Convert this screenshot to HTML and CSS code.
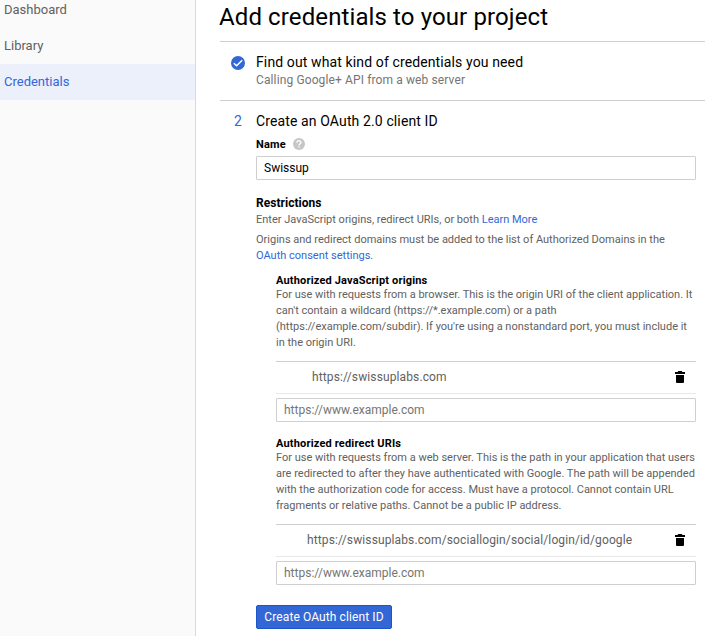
FILE: index.html
```html
<!DOCTYPE html>
<html lang="en">
<head>
<meta charset="utf-8">
<title>Add credentials to your project</title>
<link rel="stylesheet" href="styles.css">
</head>
<body>
<nav class="sidebar">
  <a class="nav-item">Dashboard</a>
  <a class="nav-item">Library</a>
  <a class="nav-item active">Credentials</a>
</nav>
<main class="content">
  <h1><span>Add credentials to your project</span></h1>
  <section class="step step-done">
    <div class="marker">
      <svg width="14" height="14" viewBox="0 0 14 14"><circle cx="7" cy="7" r="7" fill="#3367d6"/><path d="M2.9 7.200 5.600 9.800 11.200 4.300" fill="none" stroke="#fff" stroke-width="1.500"/></svg>
    </div>
    <div class="step-body">
      <h2><span>Find out what kind of credentials you need</span></h2>
      <p class="summary"><span>Calling Google+ API from a web server</span></p>
    </div>
  </section>
  <section class="step step-current">
    <div class="marker">2</div>
    <div class="step-body">
      <h2><span>Create an OAuth 2.0 client ID</span></h2>
      <div class="label-row"><label for="name">Name</label>
        <svg width="12" height="12" viewBox="0 0 12 12"><circle cx="6" cy="6" r="6" fill="#c6c6c6"/><path d="M4 4.700C4 2.100 8 2.100 8 4.500 8 5.700 6 5.800 6 7.400M6 8.500v1.300" fill="none" stroke="#fff" stroke-width="1.300"/></svg>
      </div>
      <input class="field" id="name" type="text" value="Swissup">
      <h3 class="restrictions">Restrictions</h3>
      <p class="text intro">Enter JavaScript origins, redirect URIs, or both <a>Learn More</a></p>
      <p class="text domains">Origins and redirect domains must be added to the list of Authorized Domains in the<br><a>OAuth consent settings</a>.</p>
      <div class="group">
        <h3>Authorized JavaScript origins</h3>
        <p class="text">For use with requests from a browser. This is the origin URI of the client application. It<br>can't contain a wildcard (https://*.example.com) or a path<br>(https://example.com/subdir). If you're using a nonstandard port, you must include it<br>in the origin URI.</p>
        <div class="uri-row origin">
          <span>https://swissuplabs.com</span>
          <svg class="trash" width="10" height="12" viewBox="0 0 10 12"><path d="M0 1h2.5l.8-1h3.4l.8 1H10v2H0zM1 4h8v6.7c0 .8-.5 1.3-1.3 1.3H2.3C1.5 12 1 11.5 1 10.700z"/></svg>
        </div>
        <input class="field" type="text" placeholder="https://www.example.com">
      </div>
      <div class="group group-redirect">
        <h3>Authorized redirect URIs</h3>
        <p class="text">For use with requests from a web server. This is the path in your application that users<br>are redirected to after they have authenticated with Google. The path will be appended<br>with the authorization code for access. Must have a protocol. Cannot contain URL<br>fragments or relative paths. Cannot be a public IP address.</p>
        <div class="uri-row redirect">
          <span>https://swissuplabs.com/sociallogin/social/login/id/google</span>
          <svg class="trash" width="10" height="12" viewBox="0 0 10 12"><path d="M0 1h2.5l.8-1h3.4l.8 1H10v2H0zM1 4h8v6.7c0 .8-.5 1.3-1.3 1.3H2.3C1.5 12 1 11.5 1 10.700z"/></svg>
        </div>
        <input class="field" type="text" placeholder="https://www.example.com">
      </div>
      <button class="create">Create OAuth client ID</button>
    </div>
  </section>
</main>
</body>
</html>
```
FILE: styles.css
```css
* { box-sizing: border-box; }
body {
  margin: 0;
  height: 636px;
  display: flex;
  overflow: hidden;
  background: #fff;
  color: #000;
  font-family: Roboto, "Liberation Sans", sans-serif;
}
h1, h2, h3, p { margin: 0; font-weight: 400; white-space: nowrap; }
svg { display: block; flex: none; }
a { color: #3367d6; }

.sidebar {
  flex: none;
  width: 196px;
  background: #fafafa;
  border-right: 1px solid #d9d9d9;
}
.nav-item {
  display: block;
  height: 36px;
  padding-left: 4px;
  line-height: 36px;
  font-size: 13px;
  color: #616161;
}
.nav-item:first-child { height: 28px; line-height: 20px; }
.nav-item.active { background: #ebf0fb; color: #3367d6; }

.content { flex: 1; margin-left: 24px; min-width: 0; }
h1 {
  height: 41px;
  margin-left: -1px;
  font-size: 24px;
  line-height: 34px;
  letter-spacing: .11px;
}
.step { display: flex; border-top: 1px solid #cfcfcf; }
.step-done { height: 59px; padding-top: 10px; }
.step-current { padding-top: 10px; }
.marker {
  flex: none;
  width: 36px;
  padding-left: 11px;
  color: #3367d6;
  font-size: 14px;
  line-height: 20px;
}
.marker svg { margin-top: 4px; }
.step-current .marker { padding-left: 14px; }
.step-body { width: 440px; }
h2 { font-size: 14px; line-height: 20px; letter-spacing: .12px; }
.summary { font-size: 12px; line-height: 16px; letter-spacing: .12px; color: #757575; }

.label-row { display: flex; gap: 7px; height: 25px; padding-top: 7px; }
.label-row label { font-size: 11px; line-height: 14px; font-weight: 700; letter-spacing: .15px; }
h3 { font-size: 11px; line-height: 14px; font-weight: 700; letter-spacing: .17px; }
.field {
  display: block;
  width: 100%;
  height: 24px;
  margin: 0;
  padding: 0 7px;
  border: 1px solid #cfcfcf;
  border-radius: 1px;
  outline: 0;
  background: #fff;
  color: #000;
  font: 12px/16px Roboto, "Liberation Sans", sans-serif;
}
.field::placeholder { color: #757575; opacity: 1; }
.restrictions { margin-top: 16px; font-size: 12px; letter-spacing: .03px; }
.text { font-size: 11px; line-height: 16px; color: #616161; }
.intro { margin-top: 2px; }
.domains { margin-top: 4px; }
.group { margin: 10px 0 0 20px; }
.group h3 + .text { margin-top: -1px; }
.group-redirect { margin-top: 15px; }
.uri-row {
  display: flex;
  align-items: center;
  justify-content: space-between;
  height: 33px;
  margin: 10px 0 4px;
  padding: 0 11px 1px 36px;
  border-top: 1px solid #cfcfcf;
  border-bottom: 1px solid #e8e8e8;
  font-size: 12px;
  letter-spacing: .12px;
  color: #616161;
}
.uri-row.redirect { padding-left: 31px; }
.create {
  display: block;
  width: 136px;
  height: 24px;
  margin-top: 20px;
  padding: 0;
  border: 1px solid #1a56c8;
  border-radius: 2px;
  background: #3367d6;
  color: #fff;
  font: 12px/20px Roboto, "Liberation Sans", sans-serif;
  letter-spacing: .1px;
}
```
